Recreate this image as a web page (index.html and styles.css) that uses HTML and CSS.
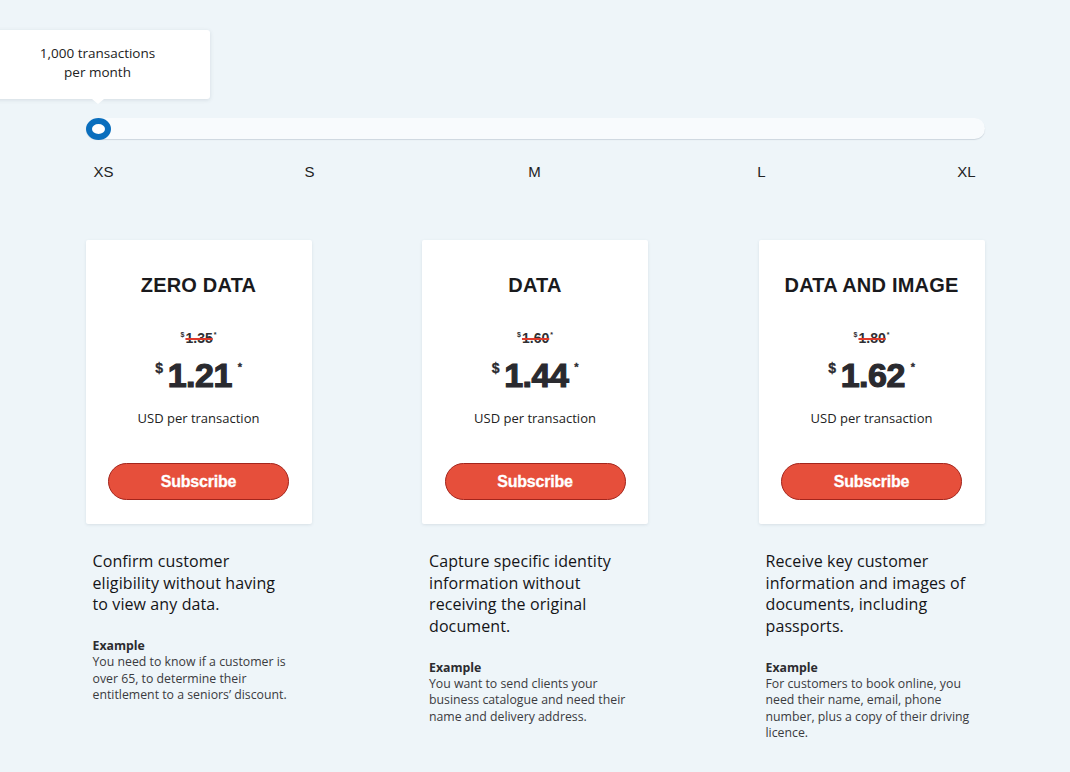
FILE: index.html
```html
<!DOCTYPE html>
<html lang="en">
<head>
    <meta charset="UTF-8">
    <meta name="viewport" content="width=device-width, initial-scale=1.0">
    <title>Pricing</title>
    <link rel="stylesheet" href="styles.css">
</head>
<body>
    <div class="page">
        <div class="slider">
            <div class="track">
                <div class="knob">
                    <div class="tooltip">1,000 transactions<br>per month</div>
                </div>
            </div>
            <div class="steps">
                <span>XS</span>
                <span>S</span>
                <span>M</span>
                <span>L</span>
                <span>XL</span>
            </div>
        </div>

        <div class="plans">
            <div class="plan">
                <div class="card">
                    <h2 class="title">ZERO DATA</h2>
                    <div class="old-price"><sup>$</sup><s>1.35</s><sup>*</sup></div>
                    <div class="price"><sup class="cur">$</sup>1.21<sup class="star">*</sup></div>
                    <p class="unit">USD per transaction</p>
                    <button class="subscribe">Subscribe</button>
                </div>
                <p class="lead">Confirm customer eligibility without having to view any data.</p>
                <div class="example">
                    <b>Example</b>
                    <p>You need to know if a customer is over 65, to determine their entitlement to a seniors’ discount.</p>
                </div>
            </div>

            <div class="plan">
                <div class="card">
                    <h2 class="title">DATA</h2>
                    <div class="old-price"><sup>$</sup><s>1.60</s><sup>*</sup></div>
                    <div class="price"><sup class="cur">$</sup>1.44<sup class="star">*</sup></div>
                    <p class="unit">USD per transaction</p>
                    <button class="subscribe">Subscribe</button>
                </div>
                <p class="lead">Capture specific identity information without receiving the original document.</p>
                <div class="example">
                    <b>Example</b>
                    <p>You want to send clients your business catalogue and need their name and delivery address.</p>
                </div>
            </div>

            <div class="plan">
                <div class="card">
                    <h2 class="title">DATA AND IMAGE</h2>
                    <div class="old-price"><sup>$</sup><s>1.80</s><sup>*</sup></div>
                    <div class="price"><sup class="cur">$</sup>1.62<sup class="star">*</sup></div>
                    <p class="unit">USD per transaction</p>
                    <button class="subscribe">Subscribe</button>
                </div>
                <p class="lead">Receive key customer information and images of documents, including passports.</p>
                <div class="example">
                    <b>Example</b>
                    <p>For customers to book online, you need their name, email, phone number, plus a copy of their driving licence.</p>
                </div>
            </div>
        </div>
    </div>
</body>
</html>
```

FILE: styles.css
```css
*{
    margin: 0;
    padding: 0;
    box-sizing: border-box;
}
body{
    background: #eef5f9;
    font-family: 'Liberation Sans', Arial, sans-serif;
    color: #1d1d20;
    overflow: hidden;
}
.page{
    width: 899px;
    margin: 0 auto;
    padding-top: 118px;
}

/* slider */
.track{
    position: relative;
    height: 21px;
    border-radius: 11px;
    background: #f8fbfd;
    box-shadow: 0 1px 1px rgba(60, 80, 100, 0.18);
}
.knob{
    position: absolute;
    left: 0;
    top: 0;
    width: 25px;
    height: 22px;
    border-radius: 50%;
    border: 6px solid #0a6ebd;
    background: #fff;
}
.tooltip{
    position: absolute;
    left: 6px;
    bottom: 35px;
    transform: translateX(-50%);
    width: 224px;
    height: 69px;
    padding-top: 14px;
    background: #fff;
    border-radius: 3px;
    box-shadow: 0 1px 4px rgba(60, 80, 100, 0.15);
    font-family: 'Open Sans', sans-serif;
    font-size: 13.5px;
    line-height: 19px;
    text-align: center;
    color: #222;
}
.tooltip::after{
    content: "";
    position: absolute;
    left: 50%;
    bottom: -5px;
    margin-left: -6px;
    border-left: 6px solid transparent;
    border-right: 6px solid transparent;
    border-top: 5px solid #fff;
}
/* the steps aren't evenly spaced, so each label gets its own column */
.steps{
    display: grid;
    grid-template-columns: 40px 372px 78px 376px 34px;
    margin-left: -2px;
    margin-top: 24px;
    text-align: center;
    font-size: 15px;
    line-height: 18px;
    color: #222;
}

/* plans */
.plans{
    display: grid;
    grid-template-columns: repeat(3, 226px);
    justify-content: space-between;
    margin-top: 59px;
}
.card{
    height: 284px;
    background: #fff;
    border-radius: 2px;
    box-shadow: 0 1px 3px rgba(60, 80, 100, 0.12);
    text-align: center;
    padding-top: 34px;
}
.title{
    font-size: 20px;
    line-height: 22px;
    font-weight: bold;
    letter-spacing: 0.2px;
    color: #1a1a1d;
}
.old-price{
    margin-top: 31px;
    font-size: 14px;
    line-height: 16px;
    font-weight: bold;
    color: #2f2f33;
}
.old-price s{
    text-decoration-color: #e03a2c;
    text-decoration-thickness: 2px;
}
.old-price sup{
    font-size: 7px;
    vertical-align: 6px;
    margin: 0 1px;
}
.price{
    margin-top: 1px;
    font-size: 34px;
    line-height: 40px;
    font-weight: bold;
    letter-spacing: -0.5px;
    color: #2a2a2f;
    -webkit-text-stroke: 1.2px #2a2a2f;
}
.price sup{
    font-size: 14px;
    -webkit-text-stroke: 0.3px #2a2a2f;
    vertical-align: 14px;
}
.price .cur{
    margin-right: 5px;
}
.price .star{
    font-size: 11px;
    margin-left: 6px;
    vertical-align: 16px;
}
.unit{
    margin-top: 15px;
    font-family: 'Open Sans', sans-serif;
    font-size: 13px;
    line-height: 16px;
    color: #222;
}
.subscribe{
    display: block;
    width: 181px;
    height: 37px;
    margin: 37px auto 0;
    border: 1px solid #a3251c;
    border-radius: 19px;
    background: #e64f3b;
    color: #fff;
    font-family: 'Liberation Sans', Arial, sans-serif;
    font-size: 16px;
    font-weight: bold;
    letter-spacing: -0.2px;
    -webkit-text-stroke: 0.3px #fff;
}
.lead{
    margin-top: 27px;
    padding: 0 18px 0 7px;
    font-family: 'Open Sans', sans-serif;
    font-size: 16px;
    line-height: 21.7px;
    letter-spacing: 0.1px;
    color: #141417;
}
.example{
    margin-top: 22px;
    padding: 0 12px 0 7px;
    font-family: 'Open Sans', sans-serif;
    font-size: 12.3px;
    line-height: 16.3px;
    color: #3b3b40;
}
.example b{
    display: block;
    color: #2c2c30;
}
```
